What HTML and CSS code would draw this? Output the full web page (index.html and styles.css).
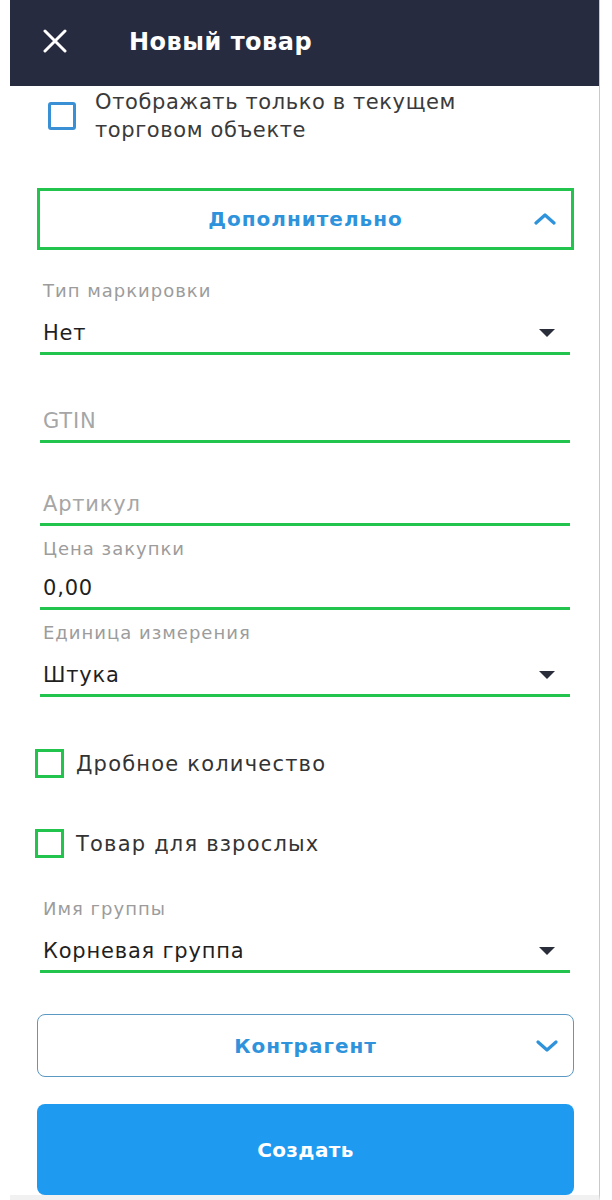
FILE: index.html
```html
<!DOCTYPE html>
<html>
<head>
  <title>Новый товар</title>
  <link rel="stylesheet" href="styles.css">
</head>
<body>

  <div class="screen">
    <header class="topbar">
      <svg class="close-icon" width="24" height="24" viewBox="0 0 24 24">
        <path d="M2 2 L22 22 M22 2 L2 22" stroke="#fff" stroke-width="3" stroke-linecap="round" fill="none"/>
      </svg>
      <h1 class="topbar-title">Новый товар</h1>
    </header>

    <main class="form">
      <label class="opt-row">
        <span class="box box-blue"></span>
        <span class="opt-text">Отображать только в текущем<br>торговом объекте</span>
      </label>

      <div class="section-btn section-open">
        <span>Дополнительно</span>
        <svg class="chev" width="22" height="12" viewBox="0 0 22 12">
          <polyline points="2,10 11,2 20,10" stroke="#2f93dc" stroke-width="3.2" fill="none" stroke-linecap="round" stroke-linejoin="round"/>
        </svg>
      </div>

      <div class="field f-marking">
        <div class="field-label">Тип маркировки</div>
        <div class="field-value">Нет <span class="tri"></span></div>
      </div>

      <div class="field f-gtin">
        <div class="field-value placeholder">GTIN</div>
      </div>

      <div class="field f-article">
        <div class="field-value placeholder">Артикул</div>
      </div>

      <div class="field f-price">
        <div class="field-label">Цена закупки</div>
        <div class="field-value">0,00</div>
      </div>

      <div class="field f-unit">
        <div class="field-label">Единица измерения</div>
        <div class="field-value">Штука <span class="tri"></span></div>
      </div>

      <label class="check-row first">
        <span class="box box-green"></span>
        <span>Дробное количество</span>
      </label>

      <label class="check-row">
        <span class="box box-green"></span>
        <span>Товар для взрослых</span>
      </label>

      <div class="field f-group">
        <div class="field-label">Имя группы</div>
        <div class="field-value">Корневая группа <span class="tri"></span></div>
      </div>

      <div class="section-btn section-closed">
        <span>Контрагент</span>
        <svg class="chev" width="22" height="12" viewBox="0 0 22 12">
          <polyline points="2,2 11,10 20,2" stroke="#2f93dc" stroke-width="3.2" fill="none" stroke-linecap="round" stroke-linejoin="round"/>
        </svg>
      </div>

      <button class="create-btn">Создать</button>
    </main>
  </div>

</body>
</html>
```

FILE: styles.css
```css
body {
  margin: 0;
  background-color: #fff;
  font-family: "DejaVu Sans", "Noto Sans", sans-serif;
  color: #2b2b2b;
}

.screen {
  margin-left: 10px;
  width: 589px;
  min-height: 1194px;
  border-right: 1px solid #c9c9c9;
  border-bottom: 6px solid #f1f1f1;
}

/* top bar */
.topbar {
  height: 86px;
  background-color: #272b40;
  display: flex;
  align-items: center;
}

.close-icon {
  margin-left: 33px;
  margin-top: -4px;
}

.topbar-title {
  margin: -2px 0 0 62px;
  color: #fff;
  font-size: 24px;
  font-weight: 600;
  letter-spacing: 0.5px;
}

.form {
  padding: 0 25px 0 27px;
  display: flex;
  flex-direction: column;
}

/* checkbox rows */
.opt-row {
  display: flex;
  align-items: center;
  padding-left: 11px;
  margin-top: 2px;
  font-size: 21px;
  line-height: 28px;
  letter-spacing: 0.6px;
  color: #3a3a3a;
}

.opt-text {
  margin-left: 19px;
}

.box {
  flex-shrink: 0;
  box-sizing: border-box;
  display: inline-block;
}

.box-blue {
  width: 28px;
  height: 28px;
  border: 3px solid #3a90d4;
  border-radius: 3px;
}

.box-green {
  width: 29px;
  height: 29px;
  border: 3px solid #22c44e;
}

.check-row {
  display: flex;
  align-items: center;
  margin-left: -2px;
  margin-top: 51px;
  font-size: 21px;
  letter-spacing: 1.2px;
  color: #333;
}

.check-row.first {
  margin-top: 52px;
}

.check-row .box {
  margin-right: 12px;
}

/* collapsible section buttons */
.section-btn {
  display: flex;
  align-items: center;
  justify-content: center;
  position: relative;
  box-sizing: border-box;
  color: #2f93dc;
  font-size: 20px;
  font-weight: 700;
  letter-spacing: 1px;
}

.section-btn .chev {
  position: absolute;
  right: 15px;
  top: 50%;
  margin-top: -6px;
}

.section-open {
  margin-top: 44px;
  height: 62px;
  border: 3px solid #22c44e;
}

.section-closed {
  margin-top: 41px;
  height: 63px;
  border: 1.5px solid #5b98c4;
  border-radius: 8px;
}

/* fields */
.field {
  margin: 0 4px 0 3px;
}

.field-label {
  font-size: 18px;
  line-height: 22px;
  letter-spacing: 1px;
  color: #9c9c9c;
  padding-left: 3px;
  margin-bottom: 15px;
}

.field-value {
  height: 32px;
  padding: 0 15px 3px 3px;
  display: flex;
  align-items: center;
  justify-content: space-between;
  font-size: 21px;
  letter-spacing: 0.8px;
  color: #1f1f1f;
  border-bottom: 3px solid #22c44e;
}

.placeholder {
  color: #a6a6a6;
}

.tri {
  width: 0;
  height: 0;
  border-left: 8px solid transparent;
  border-right: 8px solid transparent;
  border-top: 8px solid #2a2d3a;
}

.f-marking {
  margin-top: 30px;
}

.f-gtin {
  margin-top: 50px;
}

.f-article {
  margin-top: 45px;
}

.f-price {
  margin-top: 12px;
}

.f-price .field-label {
  margin-bottom: 12px;
}

.f-unit {
  margin-top: 12px;
}

.f-group {
  margin-top: 40px;
}

.create-btn {
  margin-top: 27px;
  height: 91px;
  border: none;
  border-radius: 8px;
  background-color: #1e9bf0;
  color: #fff;
  font-family: inherit;
  font-size: 20px;
  font-weight: 700;
  letter-spacing: 0.4px;
}
```
